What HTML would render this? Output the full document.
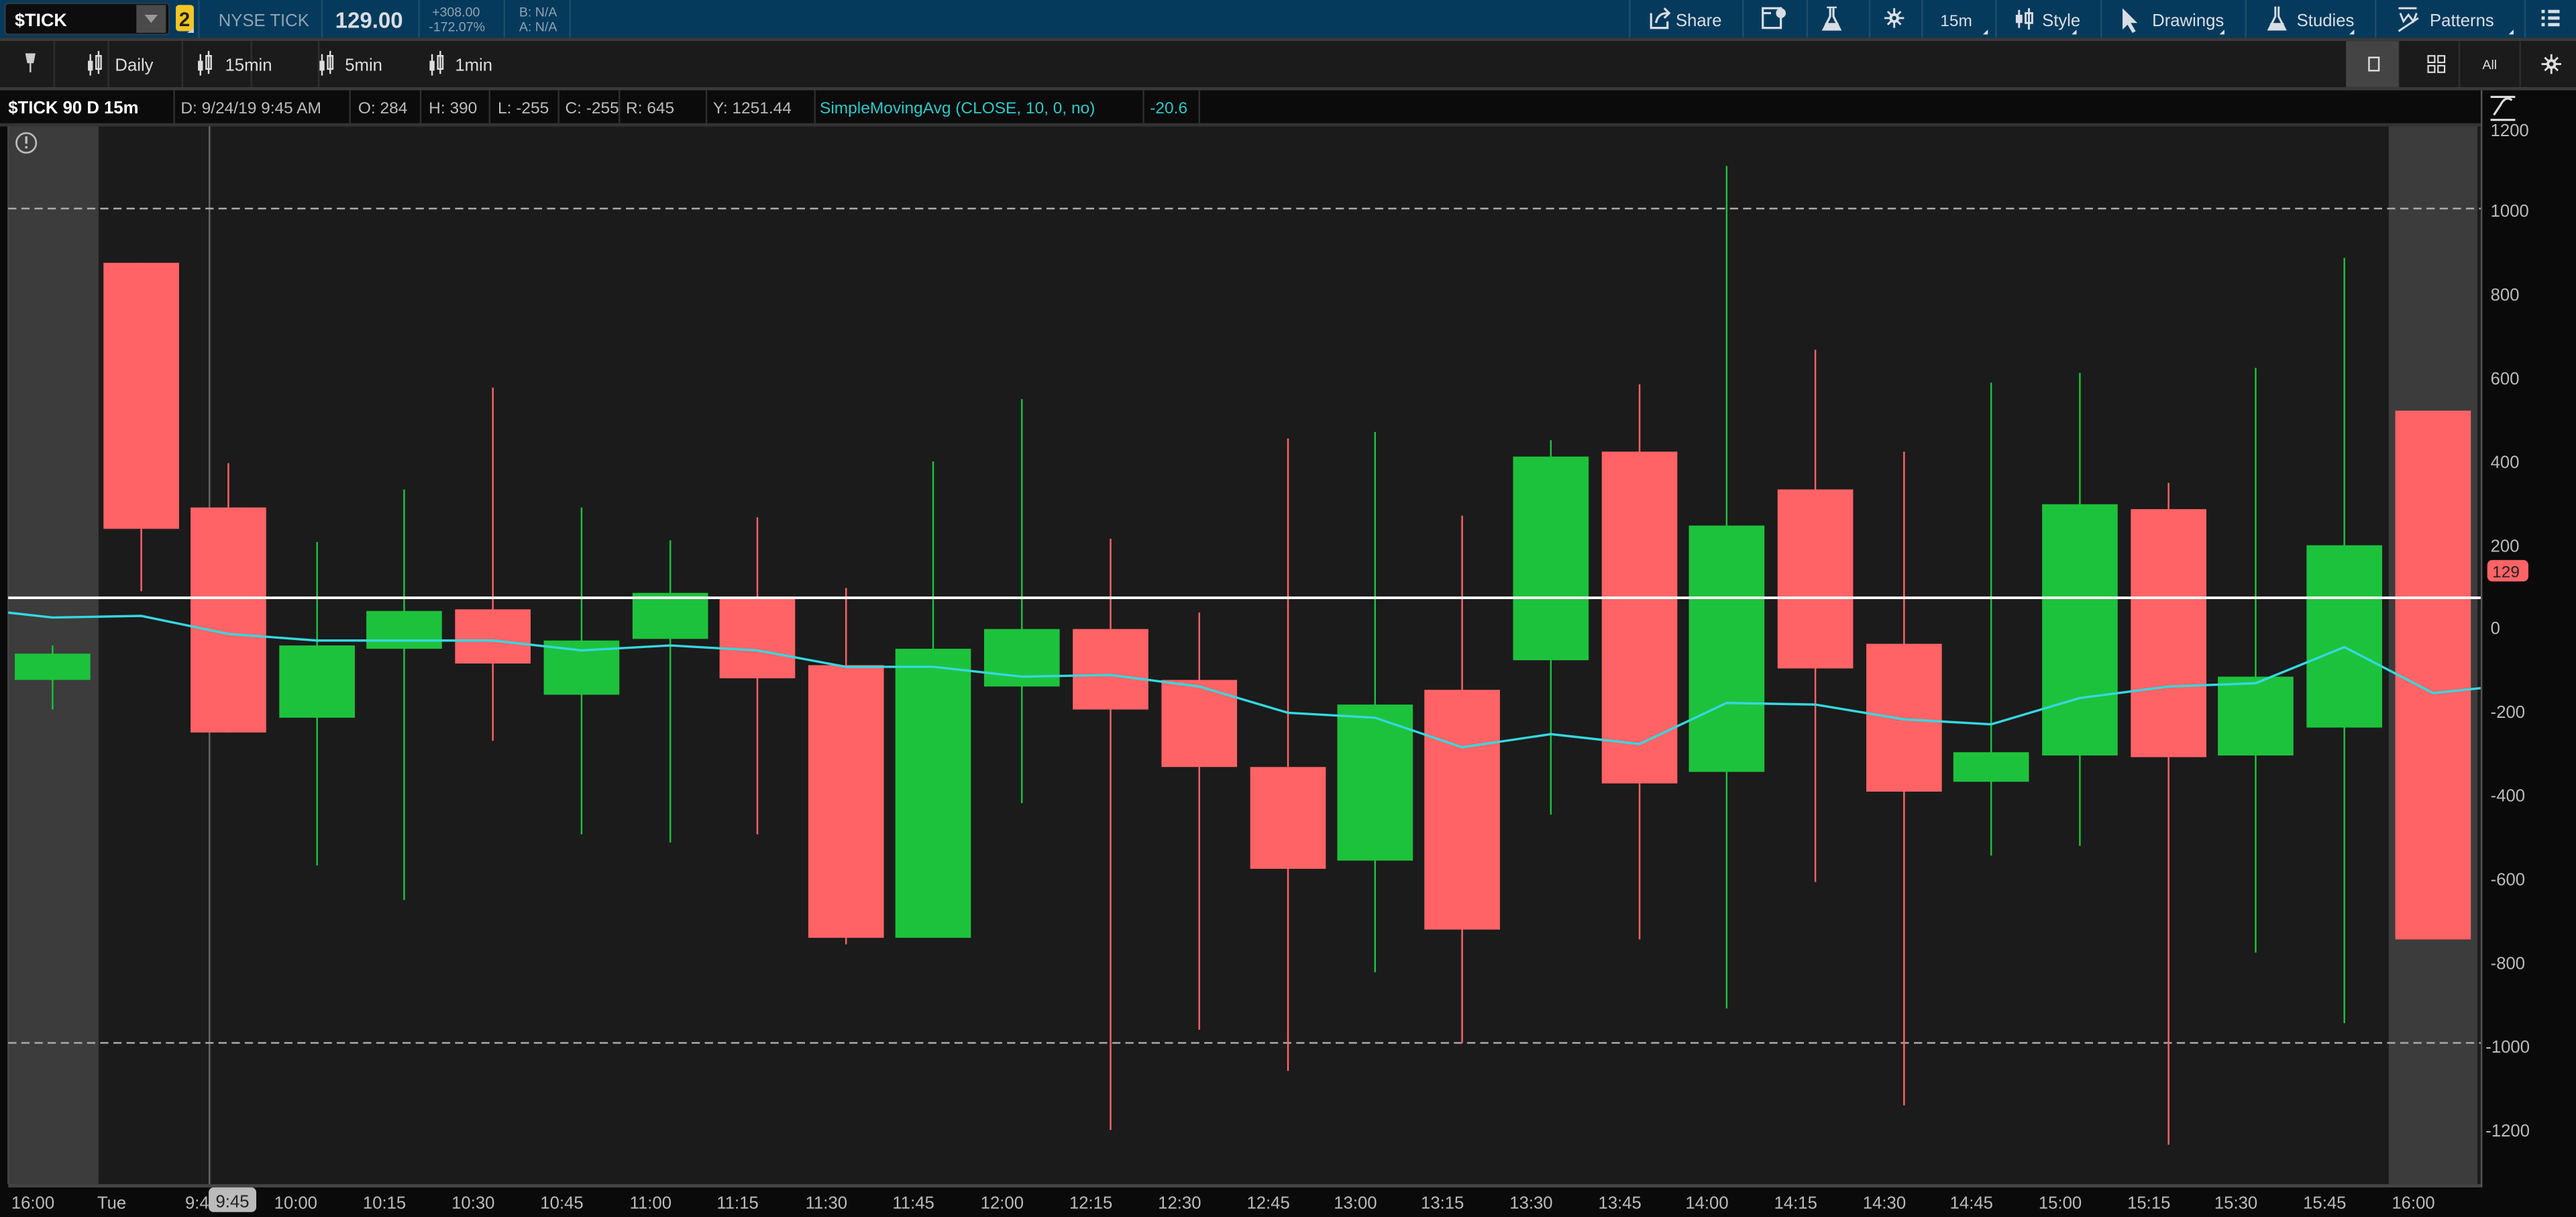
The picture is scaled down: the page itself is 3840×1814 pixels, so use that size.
<!DOCTYPE html>
<html><head><meta charset="utf-8"><style>
html,body{margin:0;padding:0;background:#0a0a0a;width:3840px;height:1814px;overflow:hidden}
svg{display:block}
text{font-family:"Liberation Sans",sans-serif}
</style></head><body>
<svg id="s" width="3840" height="1814" viewBox="0 0 1568 741" preserveAspectRatio="none" xmlns="http://www.w3.org/2000/svg">
<!-- top bar -->
<rect x="0" y="0" width="1568" height="23" fill="#063a5c"/>
<rect x="0" y="23" width="1568" height="2" fill="#3a3a3a"/>
<rect x="3" y="2" width="100" height="19" rx="2" fill="#0d0d0d" stroke="#2a3a44"/>
<rect x="83" y="3" width="18" height="17" fill="#4a4a4a"/>
<path d="M88 9 L96 9 L92 14 Z" fill="#999"/>
<text x="9" y="16" font-size="11" fill="#fff" font-weight="bold">$TICK</text>
<rect x="107" y="3" width="11" height="16" rx="2" fill="#f2c624"/>
<text x="109" y="16" font-size="12" fill="#222" font-weight="bold">2</text>
<path d="M114 20 L118 20 L118 17Z" fill="#ccc"/>
<line x1="121" y1="0" x2="121" y2="23" stroke="#1c4d6d"/>
<text x="133" y="16" font-size="10.5" fill="#8fa3b3">NYSE TICK</text>
<line x1="196" y1="0" x2="196" y2="23" stroke="#1c4d6d"/>
<text x="204" y="17" font-size="13.5" fill="#d8dee4" font-weight="bold">129.00</text>
<line x1="255" y1="0" x2="255" y2="23" stroke="#1c4d6d"/>
<text x="263" y="10" font-size="8" fill="#8fa3b3">+308.00</text>
<text x="261" y="19" font-size="8" fill="#8fa3b3">-172.07%</text>
<line x1="307" y1="0" x2="307" y2="23" stroke="#1c4d6d"/>
<text x="316" y="10" font-size="8" fill="#8fa3b3">B: N/A</text>
<text x="316" y="19" font-size="8" fill="#8fa3b3">A: N/A</text>
<line x1="347" y1="0" x2="347" y2="23" stroke="#1c4d6d"/>
<g stroke="#1c4d6d">
<line x1="992" y1="0" x2="992" y2="23"/><line x1="1061" y1="0" x2="1061" y2="23"/><line x1="1100" y1="0" x2="1100" y2="23"/><line x1="1138" y1="0" x2="1138" y2="23"/><line x1="1170" y1="0" x2="1170" y2="23"/><line x1="1215" y1="0" x2="1215" y2="23"/><line x1="1279" y1="0" x2="1279" y2="23"/><line x1="1367" y1="0" x2="1367" y2="23"/><line x1="1446" y1="0" x2="1446" y2="23"/><line x1="1537" y1="0" x2="1537" y2="23"/>
</g>
<g fill="none" stroke="#d8dee4" stroke-width="1.3">
<path d="M1005 8 V17 H1015 V13"/><path d="M1008 14 Q1009 8 1015 8 M1013 5 L1016 8 L1013 11"/>
<rect x="1073" y="5" width="11" height="12"/><line x1="1073" y1="8" x2="1078" y2="8"/>
<path d="M1114 5 V10 L1110 18 H1120 L1116 10 V5"/>
</g>
<circle cx="1084" cy="8" r="3" fill="#d8dee4"/>
<path d="M1111 14 H1119 L1120 18 H1110Z" fill="#d8dee4"/>
<line x1="1112" y1="4.5" x2="1118" y2="4.5" stroke="#d8dee4"/>
<g stroke="#d8dee4" stroke-width="1.2"><line x1="1153" y1="5" x2="1153" y2="17"/><line x1="1147" y1="11" x2="1159" y2="11"/><line x1="1149" y1="7" x2="1157" y2="15"/><line x1="1157" y1="7" x2="1149" y2="15"/></g>
<circle cx="1153" cy="11" r="3" fill="#d8dee4"/><circle cx="1153" cy="11" r="1.3" fill="#063a5c"/>
<text x="1020" y="16" font-size="10.5" fill="#d8dee4">Share</text>
<text x="1181" y="16" font-size="10" fill="#d8dee4">15m</text>
<path d="M1207 21 L1210 21 L1210 18Z M1261 21 L1264 21 L1264 18Z M1351 21 L1354 21 L1354 18Z M1430 21 L1433 21 L1433 18Z M1527 21 L1530 21 L1530 18Z" fill="#d8dee4"/>
<g stroke="#d8dee4" stroke-width="1.2" fill="none"><line x1="1229" y1="6" x2="1229" y2="17"/><line x1="1235" y1="5" x2="1235" y2="18"/><rect x="1233" y="8" width="4" height="6"/></g>
<rect x="1227" y="9" width="4" height="5" fill="#d8dee4"/>
<text x="1243" y="16" font-size="10.5" fill="#d8dee4">Style</text>
<path d="M1292 5 L1292 18 L1295 15 L1298 20 L1300 19 L1297 14 L1301 14Z" fill="#d8dee4"/>
<text x="1310" y="16" font-size="10.5" fill="#d8dee4">Drawings</text>
<path d="M1385 4 V10 L1381 18 H1391 L1387 10 V4" fill="none" stroke="#d8dee4" stroke-width="1.2"/><path d="M1382 14 H1390 L1391 18 H1381Z" fill="#d8dee4"/>
<text x="1398" y="16" font-size="10.5" fill="#d8dee4">Studies</text>
<path d="M1460 5 H1471 M1461 8 L1463 13 L1466 9 L1469 13 L1471 8 M1460 19 L1472 11" fill="none" stroke="#d8dee4" stroke-width="1.2"/>
<text x="1479" y="16" font-size="10.5" fill="#d8dee4">Patterns</text>
<g fill="#d8dee4"><rect x="1547" y="6" width="2" height="2"/><rect x="1551" y="6" width="7" height="2"/><rect x="1547" y="10" width="2" height="2"/><rect x="1551" y="10" width="7" height="2"/><rect x="1547" y="14" width="2" height="2"/><rect x="1551" y="14" width="7" height="2"/></g>
<!-- toolbar -->
<rect x="0" y="25" width="1568" height="28" fill="#1b1b1b"/>
<rect x="0" y="53" width="1568" height="2" fill="#3a3a3a"/>
<g stroke="#2e2e2e"><line x1="33" y1="25" x2="33" y2="53"/><line x1="66" y1="25" x2="66" y2="53"/><line x1="111" y1="25" x2="111" y2="53"/><line x1="153" y1="25" x2="153" y2="53"/><line x1="194" y1="25" x2="194" y2="53"/><line x1="1460" y1="25" x2="1460" y2="53"/><line x1="1497" y1="25" x2="1497" y2="53"/><line x1="1534" y1="25" x2="1534" y2="53"/></g>
<path d="M16 33 H21 L20 38 H17Z M18.5 38 V44" fill="#ccc" stroke="#ccc"/>
<g fill="none" stroke="#ddd" stroke-width="1">
<line x1="55" y1="33" x2="55" y2="46"/><line x1="60" y1="31" x2="60" y2="45"/><rect x="58.5" y="34" width="3" height="8"/>
<line x1="122" y1="33" x2="122" y2="46"/><line x1="127" y1="31" x2="127" y2="45"/><rect x="125.5" y="34" width="3" height="8"/>
<line x1="196" y1="33" x2="196" y2="46"/><line x1="201" y1="31" x2="201" y2="45"/><rect x="199.5" y="34" width="3" height="8"/>
<line x1="263" y1="33" x2="263" y2="46"/><line x1="268" y1="31" x2="268" y2="45"/><rect x="266.5" y="34" width="3" height="8"/>
</g>
<g fill="#ddd"><rect x="53.5" y="37" width="3" height="6"/><rect x="120.5" y="37" width="3" height="6"/><rect x="194.5" y="37" width="3" height="6"/><rect x="261.5" y="37" width="3" height="6"/></g>
<text x="70" y="43" font-size="10.5" fill="#ddd">Daily</text>
<text x="137" y="43" font-size="10.5" fill="#ddd">15min</text>
<text x="210" y="43" font-size="10.5" fill="#ddd">5min</text>
<text x="277" y="43" font-size="10.5" fill="#ddd">1min</text>
<rect x="1428" y="25" width="32" height="28" fill="#444"/>
<rect x="1442" y="35" width="6" height="8" fill="none" stroke="#ddd"/>
<g fill="none" stroke="#ddd" stroke-width=".9"><rect x="1478" y="34" width="4" height="4"/><rect x="1484" y="34" width="4" height="4"/><rect x="1478" y="40" width="4" height="4"/><rect x="1484" y="40" width="4" height="4"/></g>
<text x="1511" y="42" font-size="8" fill="#ddd">All</text>
<g stroke="#ddd" stroke-width="1.2"><line x1="1553" y1="33" x2="1553" y2="45"/><line x1="1547" y1="39" x2="1559" y2="39"/><line x1="1549" y1="35" x2="1557" y2="43"/><line x1="1557" y1="35" x2="1549" y2="43"/></g>
<circle cx="1553" cy="39" r="3" fill="#ddd"/><circle cx="1553" cy="39" r="1.3" fill="#1b1b1b"/>
<!-- info bar -->
<rect x="0" y="55" width="1510" height="20" fill="#0b0b0b"/>
<g stroke="#2e2e2e"><line x1="106" y1="55" x2="106" y2="75"/><line x1="213" y1="55" x2="213" y2="75"/><line x1="256" y1="55" x2="256" y2="75"/><line x1="298" y1="55" x2="298" y2="75"/><line x1="340" y1="55" x2="340" y2="75"/><line x1="377" y1="55" x2="377" y2="75"/><line x1="430" y1="55" x2="430" y2="75"/><line x1="496" y1="55" x2="496" y2="75"/><line x1="696" y1="55" x2="696" y2="75"/><line x1="730" y1="55" x2="730" y2="75"/></g>
<text x="5" y="69" font-size="10.5" fill="#fff" font-weight="bold">$TICK 90 D 15m</text>
<g font-size="10" fill="#bbb"><text x="110" y="69">D: 9/24/19 9:45 AM</text><text x="218" y="69">O: 284</text><text x="261" y="69">H: 390</text><text x="303" y="69">L: -255</text><text x="344" y="69">C: -255</text><text x="381" y="69">R: 645</text><text x="434" y="69">Y: 1251.44</text></g>
<text x="499" y="69" font-size="10" fill="#2ec8c8">SimpleMovingAvg (CLOSE, 10, 0, no)</text>
<text x="700" y="69" font-size="10" fill="#2ec8c8">-20.6</text>
<rect x="0" y="75" width="1510" height="2" fill="#333"/>
<!-- chart -->
<rect x="5" y="77" width="1505" height="644" fill="#1b1b1b"/>
<rect x="5" y="77" width="55" height="644" fill="#3c3c3c"/>
<rect x="1454" y="77" width="54" height="644" fill="#3c3c3c"/>
<line x1="5" y1="77" x2="5" y2="721" stroke="#444"/>
<line x1="127.5" y1="77" x2="127.5" y2="721" stroke="#666"/>
<circle cx="16" cy="87" r="6" fill="none" stroke="#bbb" stroke-width="1.1"/>
<rect x="15.3" y="83" width="1.4" height="4.5" fill="#bbb"/><rect x="15.3" y="89" width="1.4" height="1.4" fill="#bbb"/>
<line x1="5" y1="127" x2="1510" y2="127" stroke="#aaa" stroke-dasharray="5,3"/>
<line x1="5" y1="635" x2="1510" y2="635" stroke="#aaa" stroke-dasharray="5,3"/>
<g id="cd"></g>
<line x1="5" y1="364" x2="1510" y2="364" stroke="#fff" stroke-width="1.6"/>
<polyline id="sma" fill="none" stroke="#35d8e0" stroke-width="1.4" points="5,373 32,376 86,375 139,386 193,390 246,390 300,390 354,396 408,393 461,396 515,406 568,406 622,412 676,411 730,418 784,434 837,437 890,455 944,447 998,453 1051,428 1105,429 1159,438 1212,441 1266,425 1320,418 1373,416 1427,394 1481,422 1510,419"/>
<rect x="5" y="721" width="1505" height="2" fill="#444"/>
<!-- right axis -->
<line x1="1510.5" y1="55" x2="1510.5" y2="723" stroke="#555"/>
<path d="M1516 59 H1531 M1516 73 H1531 M1518 70 L1522 64 Q1525 58 1529 61" fill="none" stroke="#ddd" stroke-width="1.3"/>
<g font-size="10.5" fill="#bbb">
<text x="1516" y="83">1200</text><text x="1516" y="132">1000</text><text x="1516" y="183">800</text><text x="1516" y="234">600</text><text x="1516" y="285">400</text><text x="1516" y="336">200</text><text x="1516" y="386">0</text><text x="1516" y="437">-200</text><text x="1516" y="488">-400</text><text x="1516" y="539">-600</text><text x="1516" y="590">-800</text><text x="1513" y="641">-1000</text><text x="1513" y="692">-1200</text>
</g>
<rect x="1514" y="341" width="25" height="13" rx="3" fill="#ff6366"/>
<text x="1517" y="351.5" font-size="10" fill="#222">129</text>
<!-- time axis -->
<g font-size="10.5" fill="#bbb" text-anchor="middle">
<text x="20" y="736">16:00</text><text x="68" y="736">Tue</text><text x="120" y="736">9:4</text>
<text x="180" y="736">10:00</text><text x="234" y="736">10:15</text><text x="288" y="736">10:30</text><text x="342" y="736">10:45</text><text x="396" y="736">11:00</text><text x="449" y="736">11:15</text><text x="503" y="736">11:30</text><text x="556" y="736">11:45</text><text x="610" y="736">12:00</text><text x="664" y="736">12:15</text><text x="718" y="736">12:30</text><text x="772" y="736">12:45</text><text x="825" y="736">13:00</text><text x="878" y="736">13:15</text><text x="932" y="736">13:30</text><text x="986" y="736">13:45</text><text x="1039" y="736">14:00</text><text x="1093" y="736">14:15</text><text x="1147" y="736">14:30</text><text x="1200" y="736">14:45</text><text x="1254" y="736">15:00</text><text x="1308" y="736">15:15</text><text x="1361" y="736">15:30</text><text x="1415" y="736">15:45</text><text x="1469" y="736">16:00</text>
</g>
<rect x="127" y="723" width="29" height="15" rx="3" fill="#bbb"/>
<text x="141.5" y="735" font-size="10.5" fill="#222" text-anchor="middle">9:45</text>
</svg>
<script>
var c=[[32,'g',398,414,393,432],[86,'r',160,322,160,360],[139,'r',309,446,282,446],[193,'g',393,437,330,527],[246,'g',372,395,298,548],[300,'r',371,404,236,451],[354,'g',390,423,309,508],[408,'g',361,389,329,513],[461,'r',364,413,315,508],[515,'r',405,571,358,575],[568,'g',395,571,281,571],[622,'g',383,418,243,489],[676,'r',383,432,328,688],[730,'r',414,467,373,627],[784,'r',467,529,267,652],[837,'g',429,524,263,592],[890,'r',420,566,314,635],[944,'g',278,402,268,496],[998,'r',275,477,234,572],[1051,'g',320,470,101,614],[1105,'r',298,407,213,537],[1159,'r',392,482,275,673],[1212,'g',458,476,233,521],[1266,'g',307,460,227,515],[1320,'r',310,461,294,697],[1373,'g',412,460,224,580],[1427,'g',332,443,157,623],[1481,'r',250,572,250,572]];
var g=document.getElementById('cd'),h='';
c.forEach(function(k){var col=k[1]=='g'?'#1dc23c':'#ff6366';
h+='<line x1="'+k[0]+'" x2="'+k[0]+'" y1="'+k[4]+'" y2="'+k[5]+'" stroke="'+col+'" stroke-width="1"/>';
h+='<rect x="'+(k[0]-23)+'" y="'+k[2]+'" width="46" height="'+(k[3]-k[2])+'" fill="'+col+'"/>';});
g.innerHTML=h;
</script>
</body></html>
